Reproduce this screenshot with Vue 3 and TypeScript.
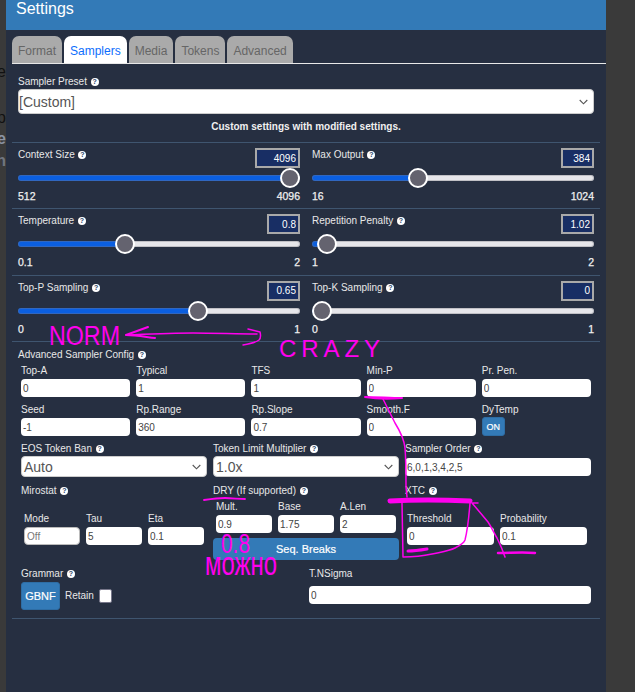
<script setup lang="ts">
interface Slider { label: string; value: number; min: number; max: number; text: string }

const tabs = ['Format', 'Samplers', 'Media', 'Tokens', 'Advanced']

const sliderRows: Slider[][] = [
  [
    { label: 'Context Size', value: 4096, min: 512, max: 4096, text: '4096' },
    { label: 'Max Output', value: 384, min: 16, max: 1024, text: '384' },
  ],
  [
    { label: 'Temperature', value: 0.8, min: 0.1, max: 2, text: '0.8' },
    { label: 'Repetition Penalty', value: 1.02, min: 1, max: 2, text: '1.02' },
  ],
  [
    { label: 'Top-P Sampling', value: 0.65, min: 0, max: 1, text: '0.65' },
    { label: 'Top-K Sampling', value: 0, min: 0, max: 1, text: '0' },
  ],
]

const fiveOne = [
  ['Top-A', '0'],
  ['Typical', '1'],
  ['TFS', '1'],
  ['Min-P', '0'],
  ['Pr. Pen.', '0'],
]
const fiveTwo = [
  ['Seed', '-1'],
  ['Rp.Range', '360'],
  ['Rp.Slope', '0.7'],
  ['Smooth.F', '0'],
]
const miro = [
  ['Mode', 'Off'],
  ['Tau', '5'],
  ['Eta', '0.1'],
]
const dry = [
  ['Mult.', '0.9'],
  ['Base', '1.75'],
  ['A.Len', '2'],
]
const xtc = [
  ['Threshold', '0'],
  ['Probability', '0.1'],
]

// The range thumb is 20px wide, so the fill ends at the thumb centre.
function fillStop(s: Slider): string {
  const ratio = (s.value - s.min) / (s.max - s.min)
  return `${10 + ratio * 262}px`
}
</script>

<template>
  <div class="page">
    <div class="strip">
      <span class="frag f1">e</span>
      <span class="frag f2">p</span>
      <span class="frag f3">e</span>
      <span class="frag f4">h</span>
    </div>

    <main class="panel">
      <header class="head">Settings</header>

      <nav class="tabs">
        <span v-for="t in tabs" :key="t" class="tab" :class="{ active: t === 'Samplers' }">{{ t }}</span>
      </nav>

      <section class="sec preset">
        <div class="lbl">Sampler Preset <span class="q">?</span></div>
        <div class="sel big">
          <span>[Custom]</span>
          <svg class="chev" width="9" height="6" viewBox="0 0 9 6"><path d="M.7 1l3.8 3.8L8.3 1" fill="none" stroke="#555" stroke-width="1.1" /></svg>
        </div>
        <div class="note">Custom settings with modified settings.</div>
      </section>

      <section v-for="(row, i) in sliderRows" :key="i" class="sec sliders">
        <div v-for="s in row" :key="s.label" class="slider">
          <div class="slider-top">
            <div class="lbl">{{ s.label }} <span class="q">?</span></div>
            <input class="num" :class="{ wide: s.text === '4096' }" :value="s.text" readonly />
          </div>
          <input
            class="range"
            type="range"
            :min="s.min"
            :max="s.max"
            :step="0.01"
            :value="s.value"
            :style="{ '--stop': fillStop(s) }"
          />
          <div class="ends"><span>{{ s.min }}</span><span>{{ s.max }}</span></div>
        </div>
      </section>

      <section class="sec adv">
        <div class="lbl adv-title">Advanced Sampler Config <span class="q">?</span></div>

        <div class="five">
          <label v-for="f in fiveOne" :key="f[0]" class="field">
            <span class="lbl">{{ f[0] }}</span>
            <input class="txt" :value="f[1]" readonly />
          </label>
        </div>

        <div class="five">
          <label v-for="f in fiveTwo" :key="f[0]" class="field">
            <span class="lbl">{{ f[0] }}</span>
            <input class="txt" :value="f[1]" readonly />
          </label>
          <div class="field">
            <span class="lbl dyn">DyTemp</span>
            <button class="on">ON</button>
          </div>
        </div>

        <div class="three eos">
          <div class="field">
            <div class="lbl">EOS Token Ban <span class="q">?</span></div>
            <div class="sel">
              <span>Auto</span>
              <svg class="chev" width="9" height="6" viewBox="0 0 9 6"><path d="M.7 1l3.8 3.8L8.3 1" fill="none" stroke="#555" stroke-width="1.1" /></svg>
            </div>
          </div>
          <div class="field">
            <div class="lbl">Token Limit Multiplier <span class="q">?</span></div>
            <div class="sel">
              <span>1.0x</span>
              <svg class="chev" width="9" height="6" viewBox="0 0 9 6"><path d="M.7 1l3.8 3.8L8.3 1" fill="none" stroke="#555" stroke-width="1.1" /></svg>
            </div>
          </div>
          <div class="field">
            <div class="lbl">Sampler Order <span class="q">?</span></div>
            <input class="txt order" value="6,0,1,3,4,2,5" readonly />
          </div>
        </div>

        <div class="three groups">
          <div class="group">
            <div class="lbl">Mirostat <span class="q">?</span></div>
            <div class="inner-three low">
              <label v-for="f in miro" :key="f[0]" class="field">
                <span class="lbl">{{ f[0] }}</span>
                <input class="txt" :class="{ mode: f[0] === 'Mode' }" :value="f[1]" readonly />
              </label>
            </div>
          </div>
          <div class="group">
            <div class="lbl">DRY (If supported) <span class="q">?</span></div>
            <div class="inner-three high">
              <label v-for="f in dry" :key="f[0]" class="field">
                <span class="lbl">{{ f[0] }}</span>
                <input class="txt" :value="f[1]" readonly />
              </label>
            </div>
            <button class="seq">Seq. Breaks</button>
          </div>
          <div class="group">
            <div class="lbl">XTC <span class="q">?</span></div>
            <div class="inner-two low">
              <label v-for="f in xtc" :key="f[0]" class="field">
                <span class="lbl">{{ f[0] }}</span>
                <input class="txt" :value="f[1]" readonly />
              </label>
            </div>
          </div>
        </div>

        <div class="two">
          <div class="gram">
            <div class="lbl">Grammar <span class="q">?</span></div>
            <div class="gram-row">
              <button class="gbnf">GBNF</button>
              <span class="lbl retain">Retain</span>
              <span class="check"></span>
            </div>
          </div>
          <label class="field">
            <span class="lbl">T.NSigma</span>
            <input class="txt" value="0" readonly />
          </label>
        </div>
      </section>
    </main>

    <!-- Hand-drawn ink lying over the screenshot -->
    <svg class="ink" width="635" height="692" viewBox="0 0 635 692">
      <g fill="none" stroke="#ff00ee" stroke-width="1.5" stroke-linecap="round" stroke-linejoin="round">
        <path stroke-width="2" d="M126 335L148 327M126 335c10 0 20 2 29 3" />
        <path d="M126 335c24-1 45-2 67-2 22 0 44 1 64 1M248 329l12 3c1 4 0 7-1 8-4 3-10 4-16 5" />
        <path stroke-width="2" d="M365 397c12 0 25 1 37 1-12 1-25 1-37-1z" />
        <path d="M383 399c4 8 8 16 12 24 5 8 9 15 10 25 1 12 1 26 1 39l1 10" />
        <path stroke-width="5" d="M390 501c20-1 55-1 80 0" />
        <path d="M402 503l1 54c10 0 20-1 29-3 9-2 17-3 23-6 6-3 9-5 10-8 3-12 4-24 5-37M472 503l6 0M472 503c6 7 11 13 16 19 4 6 6 11 9 16 3 6 6 13 8 19" />
        <path stroke-width="3" d="M408 551c6 0 13-1 19-2" />
        <path stroke-width="2.5" d="M498 553c12 0 25-1 37 0" />
        <path stroke-width="1.8" d="M204 500c7-1 14-2 21-2 7 0 14 1 20 1" />
      </g>
      <g class="ink-text">
        <text x="49" y="345" font-size="27" textLength="71" lengthAdjust="spacingAndGlyphs">NORM</text>
        <text x="279" y="357" font-size="24" textLength="101">CRAZY</text>
        <text x="221" y="553" font-size="27" textLength="29" lengthAdjust="spacingAndGlyphs">0.8</text>
        <text x="205" y="575" font-size="34" textLength="72" lengthAdjust="spacingAndGlyphs">можно</text>
      </g>
    </svg>
  </div>
</template>

<style>
html, body { margin: 0; background: #3a3a3a; }
</style>

<style scoped>
.page {
  position: relative;
  display: flex;
  width: 635px;
  height: 692px;
  overflow: hidden;
  background: #3a3a3a;
  font-family: "Liberation Sans", Arial, sans-serif;
}
.strip {
  position: relative;
  flex: 0 0 6px;
  overflow: hidden;
}
.frag {
  position: absolute;
  right: 0;
  font-size: 16px;
  line-height: 18px;
  color: #111;
}
.f1 { top: 63px; }
.f2 { top: 109px; }
.f3 { top: 130px; color: #8b93a3; font-weight: bold; }
.f4 { top: 152px; color: #70757f; font-weight: bold; }

.panel {
  flex: 0 0 600px;
  height: 692px;
  background: #262f41;
  color: #e8e8e8;
}
.head {
  height: 30px;
  padding-left: 10px;
  background: #337ab7;
  color: #fff;
  font-size: 16px;
  line-height: 18px;
}
.tabs {
  display: flex;
  gap: 2px;
  height: 27px;
  margin: 6px 0 0 6px;
  border-bottom: 1px solid #e8e8e8;
}
.tab {
  padding: 0 6px;
  border-radius: 7px 7px 0 0;
  background: #aaa;
  color: #666;
  font-size: 12px;
  line-height: 31px;
}
.tab.active {
  background: #fff;
  color: #0d6efd;
}

.sec {
  margin: 0 6px;
  border-bottom: 1px solid #3f556f;
}
.lbl {
  font-size: 10px;
  line-height: 12px;
  color: #e8e8e8;
}
.q {
  display: inline-block;
  width: 8px;
  height: 8px;
  margin-left: 1px;
  border-radius: 50%;
  background: #fff;
  color: #274468;
  font-size: 7px;
  font-weight: bold;
  line-height: 8px;
  text-align: center;
  vertical-align: 1px;
}

.preset {
  height: 79px;
  padding: 12px 6px 0;
  box-sizing: border-box;
}
.sel {
  position: relative;
  display: flex;
  align-items: center;
  box-sizing: border-box;
  height: 21px;
  padding-left: 2px;
  border: 1px solid #ccc;
  border-radius: 4px;
  background: #fff;
  color: #555;
  font-size: 14px;
}
.sel.big {
  height: 25px;
  margin-top: 1px;
  padding-left: 0;
}
.chev {
  position: absolute;
  top: 50%;
  right: 5px;
  margin-top: -3px;
}
.note {
  margin-top: 6px;
  font-size: 10px;
  font-weight: bold;
  line-height: 13px;
  text-align: center;
  color: #f0f0f0;
}

.sliders {
  display: grid;
  grid-template-columns: 282px 282px;
  gap: 12px;
  box-sizing: border-box;
  height: 66.4px;
  padding: 5px 6px 0;
}
.slider-top {
  display: flex;
  justify-content: space-between;
  align-items: flex-start;
  height: 20px;
}
.slider-top .lbl { margin-top: 1px; }
.num {
  box-sizing: border-box;
  width: 33px;
  height: 20px;
  padding: 0 2px;
  border: 2px solid #a9a9a9;
  border-radius: 0;
  outline: none;
  background: #182e64;
  color: #fff;
  font: 10px "Liberation Sans", Arial, sans-serif;
  text-align: right;
}
.num.wide { width: 45px; }
.range {
  display: block;
  width: 282px;
  height: 20px;
  margin: 0;
  padding: 0;
  appearance: none;
  -webkit-appearance: none;
  background: transparent;
}
.range::-webkit-slider-runnable-track {
  height: 6px;
  border-radius: 3px;
  background: linear-gradient(to right, #0b5fe0 var(--stop), #e6e6ea var(--stop));
  box-shadow: inset 0 0 0 1px rgba(120, 120, 130, 0.35);
}
.range::-webkit-slider-thumb {
  -webkit-appearance: none;
  box-sizing: border-box;
  width: 20px;
  height: 20px;
  margin-top: -7px;
  border: 2px solid #fff;
  border-radius: 50%;
  background: #64636f;
}
.ends {
  display: flex;
  justify-content: space-between;
  margin-top: 1px;
  font-size: 10.5px;
  line-height: 14px;
  color: #f0f0f0;
  -webkit-text-stroke: 0.25px #f0f0f0;
}

.adv {
  box-sizing: border-box;
  height: 277px;
  padding: 7px 9px 0;
}
.adv-title { margin-left: -3px; }
.five {
  display: grid;
  grid-template-columns: repeat(5, 1fr);
  gap: 6px;
  margin-top: 4px;
  height: 35px;
}
.field {
  display: flex;
  flex-direction: column;
  min-width: 0;
}
.field > .lbl { height: 14px; line-height: 12px; }
.txt {
  box-sizing: border-box;
  width: 100%;
  height: 18px;
  padding: 0 2px;
  border: 0;
  border-radius: 4px;
  outline: none;
  background: #fff;
  color: #444;
  font: 10px "Liberation Sans", Arial, sans-serif;
}
.field > .dyn { height: 13px; }
.on {
  box-sizing: border-box;
  width: 23px;
  height: 19px;
  padding: 0;
  border: 1px solid #2e6da4;
  border-radius: 3px;
  background: #337ab7;
  color: #fff;
  font: 9px "Liberation Sans", Arial, sans-serif;
  -webkit-text-stroke: 0.2px #fff;
}
.three {
  display: grid;
  grid-template-columns: repeat(3, 186px);
  gap: 6px;
}
.eos { margin-top: 5px; height: 35px; }
.eos .field > .lbl { height: 8px; margin-bottom: 4px; line-height: 10px; }
.order { margin-top: 2px; }
.groups { margin-top: 6px; height: 76px; }
.inner-three {
  display: grid;
  grid-template-columns: repeat(3, 56px);
  gap: 6px;
  padding: 0 3px;
}
.inner-two {
  display: grid;
  grid-template-columns: repeat(2, 87px);
  gap: 6px;
  padding: 0 2px;
}
.low { margin-top: 16px; }
.high { margin-top: 4px; }
.mode { border: 1px solid #bbb; color: #777; }
.seq {
  display: block;
  box-sizing: border-box;
  width: 186px;
  height: 22px;
  margin-top: 5px;
  padding: 0;
  border: 0;
  border-radius: 4px;
  background: #337ab7;
  color: #fff;
  font: 11px "Liberation Sans", Arial, sans-serif;
  -webkit-text-stroke: 0.2px #fff;
}
.two {
  display: grid;
  grid-template-columns: 282px 282px;
  gap: 6px;
  margin-top: 7px;
}
.gram-row {
  display: flex;
  align-items: center;
  margin-top: 2px;
}
.gbnf {
  box-sizing: border-box;
  width: 39px;
  height: 28px;
  padding: 0;
  border: 1px solid #2e6da4;
  border-radius: 3px;
  background: #337ab7;
  color: #fff;
  font: 11px "Liberation Sans", Arial, sans-serif;
  -webkit-text-stroke: 0.2px #fff;
}
.retain { margin-left: 5px; }
.check {
  box-sizing: border-box;
  width: 13px;
  height: 14px;
  margin-left: 5px;
  border: 1px solid #77778a;
  border-radius: 2px;
  background: #fff;
}
.two .field > .lbl { height: 12px; margin-bottom: 6px; }

.ink {
  position: absolute;
  top: 0;
  left: 0;
  pointer-events: none;
}
.ink-text text {
  fill: #ff00ee;
  font-family: "Liberation Sans", Arial, sans-serif;
  font-weight: normal;
}
</style>
